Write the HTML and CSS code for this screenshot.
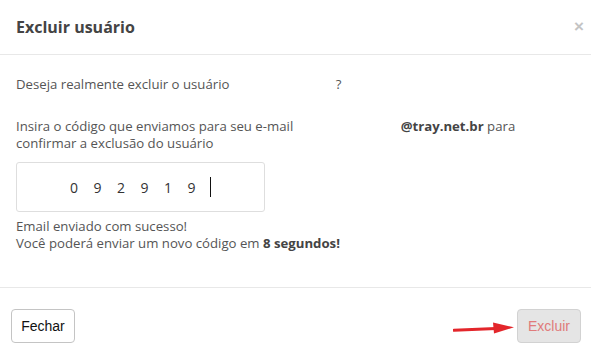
FILE: index.html
```html
<!DOCTYPE html>
<html lang="pt-BR">
<head>
<meta charset="utf-8">
<link rel="stylesheet" href="styles.css">
</head>
<body>
<div class="modal">
  <div class="modal-header">
    <h4 class="modal-title">Excluir usuário</h4>
    <span class="close">×</span>
  </div>
  <div class="modal-body">
    <p class="question">Deseja realmente excluir o usuário <span class="redacted user"></span>?</p>
    <p class="instr">Insira o código que enviamos para seu e-mail <span class="redacted mail"></span><strong>@tray.net.br</strong> para<br>confirmar a exclusão do usuário</p>
    <div class="code-input"><span class="digits">092919</span><span class="caret"></span></div>
    <p class="status">Email enviado com sucesso!<br>Você poderá enviar um novo código em <strong>8 segundos!</strong></p>
  </div>
  <div class="modal-footer">
    <button class="btn btn-default">Fechar</button>
    <div class="right">
      <svg class="arrow" width="62" height="14" viewBox="0 0 62 14">
        <path d="M1 9.2 L43 7.4" stroke="#e3262b" stroke-width="3" stroke-linecap="round" fill="none"/>
        <path d="M40 1.5 L61 6.3 L41 12.5 Z" fill="#e3262b"/>
      </svg>
      <button class="btn btn-danger" disabled>Excluir</button>
    </div>
  </div>
</div>
</body>
</html>
```
FILE: styles.css
```css
* { box-sizing: border-box; }
html, body { margin: 0; padding: 0; background: #fff; }
body {
  font-family: "Open Sans", "Liberation Sans", sans-serif;
  font-size: 13.2px;
  color: #555;
}
.modal { width: 591px; height: 358px; background: #fff; }
.modal-header {
  height: 55px;
  border-bottom: 1px solid #e8e8e8;
  padding: 0 7px 0 16px;
  display: flex;
  align-items: center;
  justify-content: space-between;
}
.modal-title {
  margin: 0;
  font-size: 16px;
  font-weight: 700;
  color: #444;
  line-height: 20px;
  padding-bottom: 1px;
}
.close {
  font-family: "Liberation Sans", sans-serif;
  font-size: 17px;
  font-weight: 700;
  color: #c4c4c4;
  line-height: 1;
  margin-bottom: 2px;
}
.modal-body {
  padding: 21px 16px 0 16px;
  height: 233px;
  border-bottom: 1px solid #e8e8e8;
}
.modal-body p { margin: 0; line-height: 17px; }
.question { margin-bottom: 25px !important; }
.redacted { display: inline-block; }
.user { width: 103px; }
.mail { width: 104px; }
strong { font-weight: 700; color: #444; }
.code-input {
  margin-top: 10px;
  width: 249px;
  height: 50px;
  border: 1px solid #dedede;
  border-radius: 3px;
  display: flex;
  align-items: center;
  justify-content: center;
  color: #333;
  font-size: 14px;
}
.digits { letter-spacing: 15.5px; }
.caret {
  display: inline-block;
  width: 1px;
  height: 20px;
  background: #111;
  margin-left: -1px;
}
.status { margin-top: 6px !important; }
.modal-footer {
  padding: 21px 10px 0 11px;
  display: flex;
  justify-content: space-between;
  align-items: flex-start;
}
.right { display: flex; align-items: center; }
.arrow { display: block; margin-right: 2px; margin-top: 3px; }
.btn {
  font-family: "Liberation Sans", Arial, sans-serif;
  font-size: 14px;
  height: 34px;
  border-radius: 4px;
  padding: 0;
  line-height: 32px;
  border: 1px solid #c4c4c4;
}
.btn-default { background: #fff; color: #111; width: 64px; }
.btn-danger { background: #e5e5e5; color: #e07b7b; border-color: #d2d2d2; width: 64px; }
```
